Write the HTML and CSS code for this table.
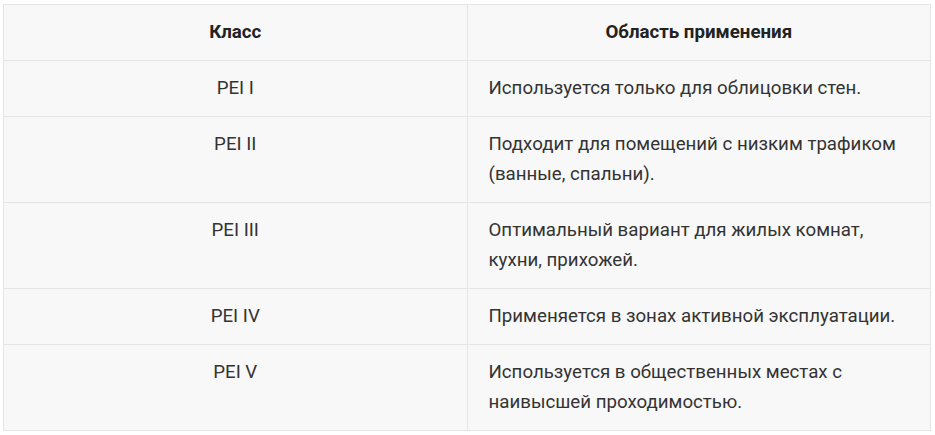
FILE: index.html
```html
<!DOCTYPE html>
<html lang="ru">
<head>
<meta charset="utf-8">
<link rel="stylesheet" href="styles.css">
</head>
<body>
<table class="pei">
  <thead>
    <tr><th>Класс</th><th>Область применения</th></tr>
  </thead>
  <tbody>
    <tr><td class="cls">PEI I</td><td class="use">Используется только для облицовки стен.</td></tr>
    <tr><td class="cls">PEI II</td><td class="use">Подходит для помещений с низким трафиком (ванные, спальни).</td></tr>
    <tr><td class="cls">PEI III</td><td class="use">Оптимальный вариант для жилых комнат, кухни, прихожей.</td></tr>
    <tr><td class="cls">PEI IV</td><td class="use">Применяется в зонах активной эксплуатации.</td></tr>
    <tr><td class="cls">PEI V</td><td class="use">Используется в общественных местах с наивысшей проходимостью.</td></tr>
  </tbody>
</table>
</body>
</html>
```
FILE: styles.css
```css
html, body {
  margin: 0;
  padding: 0;
  background: #ffffff;
}
body {
  padding: 4px 4px 0 3px;
  font-family: Roboto, "Liberation Sans", sans-serif;
  color: #333333;
}
.pei {
  width: 928px;
  border-collapse: collapse;
  table-layout: fixed;
  background: #f8f8f8;
  font-size: 18.7px;
  line-height: 30px;
}
.pei th,
.pei td {
  border: 1px solid #e5e5e5;
  padding: 12px 21px 13px 21px;
  vertical-align: top;
}
.pei th {
  font-weight: 700;
  text-align: center;
  color: #222222;
}
.pei td.cls {
  text-align: center;
}
.pei td.use {
  text-align: left;
}
```
